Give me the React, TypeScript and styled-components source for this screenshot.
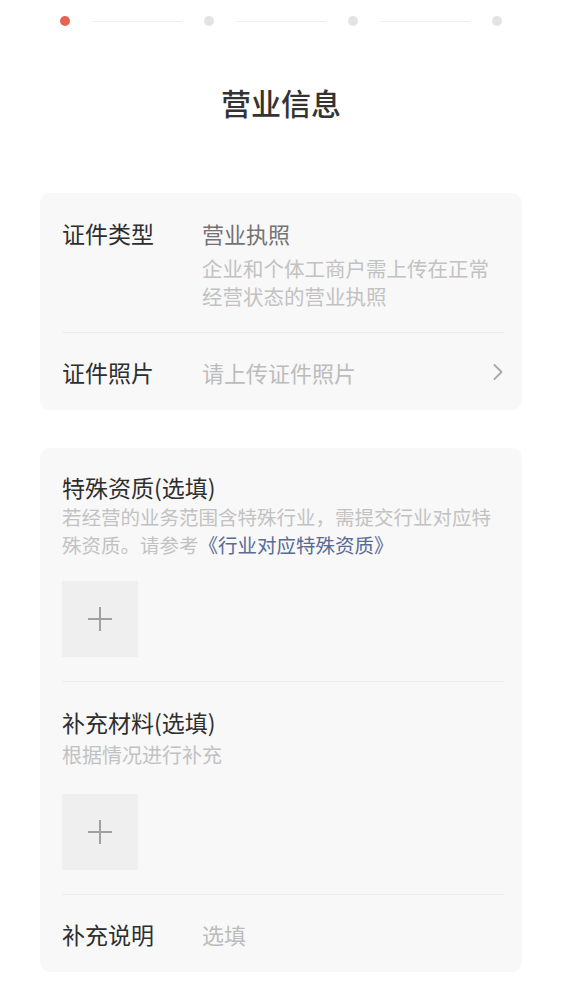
import React from "react";
import styled, { createGlobalStyle } from "styled-components";

const GlobalStyle = createGlobalStyle`
  html, body {
    margin: 0;
    padding: 0;
    background: #ffffff;
  }
  body {
    font-family: "Noto Sans CJK SC", "Noto Sans", sans-serif;
    color: #333333;
    -webkit-font-smoothing: antialiased;
  }
  * { box-sizing: border-box; }
`;

const Page = styled.div`
  width: 562px;
  min-height: 986px;
  background: #ffffff;
  display: flex;
  flex-direction: column;
`;

const Stepper = styled.div`
  height: 42px;
  display: flex;
  align-items: center;
  padding-left: 60px;
`;

const Dot = styled.span<{ $active?: boolean }>`
  width: 10px;
  height: 10px;
  border-radius: 50%;
  flex: none;
  background: ${(p) => (p.$active ? "#e8634f" : "#e3e3e3")};
`;

const StepLine = styled.span`
  width: 90px;
  height: 1px;
  margin: 0 22px;
  background: #efefef;
  flex: none;
`;

const Title = styled.h1`
  margin: 41px 0 0;
  height: 38px;
  line-height: 38px;
  text-align: center;
  font-size: 30px;
  font-weight: 500;
  color: #333333;
`;

const Card = styled.section<{ $top: number }>`
  margin: ${(p) => p.$top}px 40px 0;
  background: #f8f8f8;
  border-radius: 10px;
  padding: 0 18px 0 22px;
  display: flex;
  flex-direction: column;
`;

const Divider = styled.div`
  height: 1px;
  background: #eeeeee;
`;

const Row = styled.div<{ $pad?: string }>`
  display: grid;
  grid-template-columns: 140px 1fr auto;
  align-items: start;
  padding: ${(p) => p.$pad || "0"};
`;

const CenterRow = styled(Row)`
  align-items: center;
  height: 77px;
`;

const Label = styled.div`
  font-size: 23px;
  line-height: 32px;
  color: #2e2e2e;
`;

const Value = styled.div`
  font-size: 22px;
  line-height: 32px;
  color: #737373;
`;

const Placeholder = styled.div`
  font-size: 22px;
  line-height: 32px;
  color: #bcbcbc;
`;

const Desc = styled.div<{ $mt?: number; $max?: number; $size?: number }>`
  font-size: ${(p) => p.$size || 20}px;
  line-height: 28px;
  color: #c2c2c2;
  margin-top: ${(p) => p.$mt || 0}px;
  ${(p) => (p.$max ? `max-width: ${p.$max}px;` : "")}
`;

const Link = styled.span`
  color: #576b95;
`;

const Section = styled.div<{ $pad: string }>`
  display: flex;
  flex-direction: column;
  padding: ${(p) => p.$pad};
`;

const UploadBox = styled.div<{ $mt: number }>`
  width: 76px;
  height: 76px;
  margin-top: ${(p) => p.$mt}px;
  background: #efefef;
  display: flex;
  align-items: center;
  justify-content: center;
`;

const Chevron = () => (
  <svg width="12" height="20" viewBox="0 0 12 20" fill="none">
    <path d="M2.5 3 L9.5 10 L2.5 17" stroke="#a8a8a8" strokeWidth="1.8" strokeLinecap="round" strokeLinejoin="round" />
  </svg>
);

const Plus = () => (
  <svg width="26" height="26" viewBox="0 0 26 26" fill="none">
    <path d="M13 1 V25 M1 13 H25" stroke="#a0a0a0" strokeWidth="2" />
  </svg>
);

export default function App() {
  return (
    <Page>
      <GlobalStyle />
      <Stepper>
        <Dot $active />
        <StepLine />
        <Dot />
        <StepLine />
        <Dot />
        <StepLine />
        <Dot />
      </Stepper>

      <Title>营业信息</Title>

      <Card $top={72}>
        <Row $pad="24px 0 22px">
          <Label>证件类型</Label>
          <div>
            <Value>营业执照</Value>
            <Desc $mt={5} $max={296} $size={20.5}>企业和个体工商户需上传在正常经营状态的营业执照</Desc>
          </div>
        </Row>
        <Divider />
        <CenterRow>
          <Label>证件照片</Label>
          <Placeholder>请上传证件照片</Placeholder>
          <Chevron />
        </CenterRow>
      </Card>

      <Card $top={38}>
        <Section $pad="23px 0 24px">
          <Label>特殊资质(选填)</Label>
          <Desc $size={19.5}>
            若经营的业务范围含特殊行业，需提交行业对应特殊资质。请参考<Link>《行业对应特殊资质》</Link>
          </Desc>
          <UploadBox $mt={22}>
            <Plus />
          </UploadBox>
        </Section>
        <Divider />
        <Section $pad="24px 0 24px">
          <Label>补充材料(选填)</Label>
          <Desc $mt={3}>根据情况进行补充</Desc>
          <UploadBox $mt={25}>
            <Plus />
          </UploadBox>
        </Section>
        <Divider />
        <CenterRow>
          <Label>补充说明</Label>
          <Placeholder>选填</Placeholder>
        </CenterRow>
      </Card>
    </Page>
  );
}
